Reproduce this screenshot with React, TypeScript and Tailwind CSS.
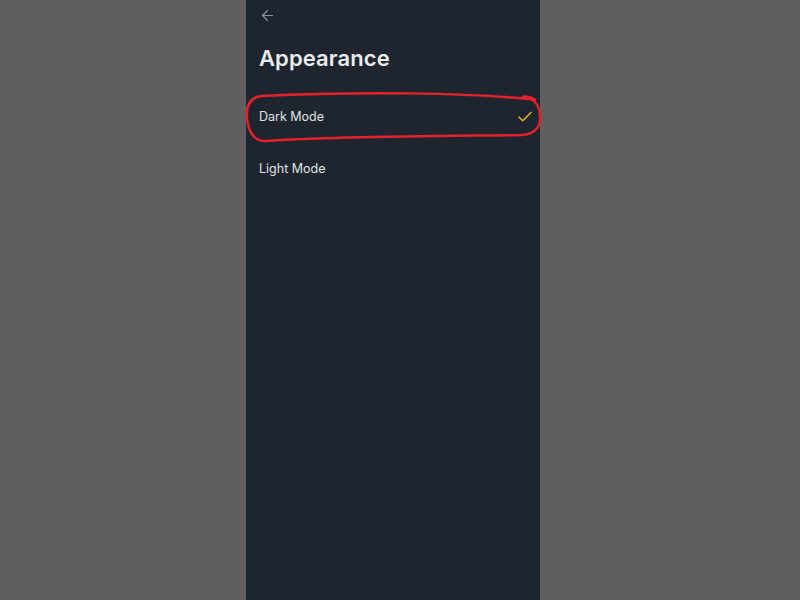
import { Check, ArrowLeft } from 'lucide-react'

export default function App() {
    return (
        <div className="relative h-[600px] w-[800px] bg-[#5f5f5f] flex font-['Inter',sans-serif]">
            {/* Phone screen */}
            <div className="ml-[246px] w-[294px] h-full bg-[#1f252e] flex flex-col px-[13px]">
                <div className="h-[30px] flex items-center">
                    <ArrowLeft className="w-[17px] h-[17px] text-[#8a929c]" strokeWidth={1.75} />
                </div>
                <h1 className="mt-[13px] text-[22px] leading-[30px] font-semibold text-[#eaecef] tracking-[0.1px]">
                    Appearance
                </h1>
                <div className="mt-[29px] flex flex-col">
                    <div className="h-[30px] flex items-center justify-between">
                        <span className="text-[12.5px] text-[#dfe2e6]">Dark Mode</span>
                        <Check className="w-[18px] h-[18px] text-[#ecb912] -mr-[7px]" strokeWidth={2} />
                    </div>
                    <div className="mt-[22px] h-[30px] flex items-center">
                        <span className="text-[12.5px] text-[#dfe2e6]">Light Mode</span>
                    </div>
                </div>
            </div>

            {/* Hand-drawn red annotation */}
            <svg className="absolute inset-0 pointer-events-none" width="800" height="600" viewBox="0 0 800 600">
                <path
                    d="M528 99 C 470 93, 360 91, 262 96 C 250 97, 246 106, 247 118 C 248 132, 255 142, 266 141 C 340 136, 450 136, 522 135 C 536 134, 541 126, 540 115 C 539 103, 533 98, 522 97 C 526 96, 532 97, 535 100"
                    fill="none"
                    stroke="#e5222c"
                    strokeWidth="2.5"
                    strokeLinecap="round"
                />
            </svg>
        </div>
    )
}
